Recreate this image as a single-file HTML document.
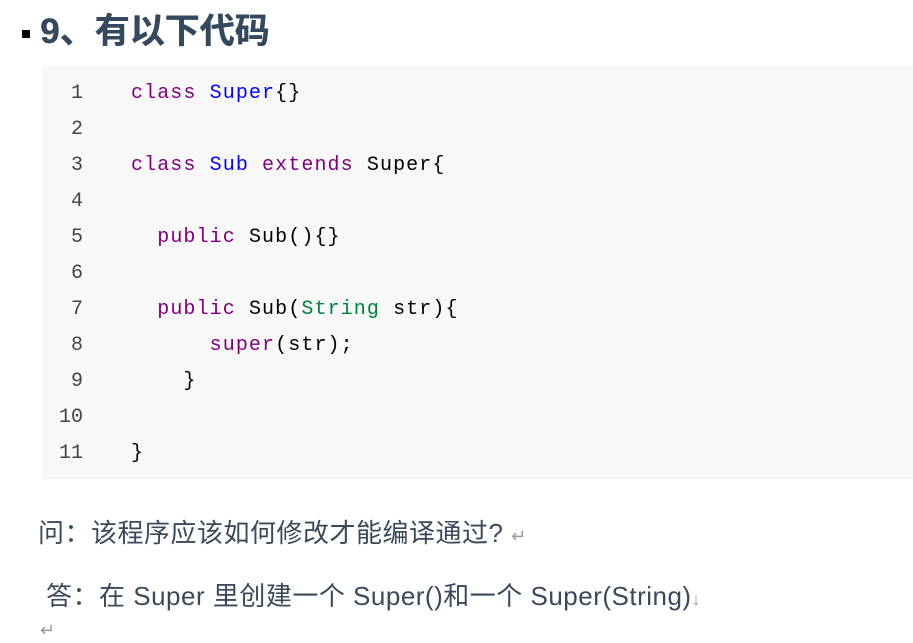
<!DOCTYPE html>
<html><head><meta charset="utf-8"><style>
body{margin:0;width:913px;height:643px;background:#fff;position:relative;overflow:hidden;font-family:"Liberation Sans","Noto Sans CJK SC",sans-serif}
.h{position:absolute;left:40px;top:9px;font-size:35px;font-weight:bold;color:#34495e;line-height:46px;text-shadow:0.5px 0 0 #34495e}
.sq{position:absolute;left:22px;top:30px;width:8px;height:8px;background:#000}
.code{position:absolute;left:42px;top:66px;width:871px;height:412px;background:#f8f8f8;border-bottom:1px solid #eee}
.ln{position:absolute;left:0;width:41px;text-align:right;font-family:"Liberation Mono",monospace;font-size:20px;color:#444}
.l{position:absolute;left:89px;font-family:"Liberation Mono",monospace;font-size:20px;letter-spacing:1.1px;color:#000;white-space:pre}
.k{color:#800080}.t{color:#0000ff}.s{color:#008040}
.p{position:absolute;font-size:26px;letter-spacing:0.5px;color:#3a4a5a;white-space:pre}
.r{color:#999;font-size:18px}
</style></head><body>
<div class="sq"></div><div class="h">9、有以下代码</div>
<div class="code">
<div class="ln" style="top:16px">1</div><div class="l" style="top:16px"><span class="k">class</span> <span class="t">Super</span>{}</div>
<div class="ln" style="top:52px">2</div>
<div class="ln" style="top:88px">3</div><div class="l" style="top:88px"><span class="k">class</span> <span class="t">Sub</span> <span class="k">extends</span> Super{</div>
<div class="ln" style="top:124px">4</div>
<div class="ln" style="top:160px">5</div><div class="l" style="top:160px">  <span class="k">public</span> Sub(){}</div>
<div class="ln" style="top:196px">6</div>
<div class="ln" style="top:232px">7</div><div class="l" style="top:232px">  <span class="k">public</span> Sub(<span class="s">String</span> str){</div>
<div class="ln" style="top:268px">8</div><div class="l" style="top:268px">      <span class="k">super</span>(str);</div>
<div class="ln" style="top:304px">9</div><div class="l" style="top:304px">    }</div>
<div class="ln" style="top:340px">10</div>
<div class="ln" style="top:376px">11</div><div class="l" style="top:376px">}</div>
</div>
<div class="p" style="left:38px;top:513px">问：该程序应该如何修改才能编译通过? <span class="r">↵</span></div>
<div class="p" style="left:46px;top:576px">答：在 Super 里创建一个 Super()和一个 Super(String)<span class="r">↓</span></div>
<div class="p r" style="left:40px;top:620px">↵</div>
</body></html>
